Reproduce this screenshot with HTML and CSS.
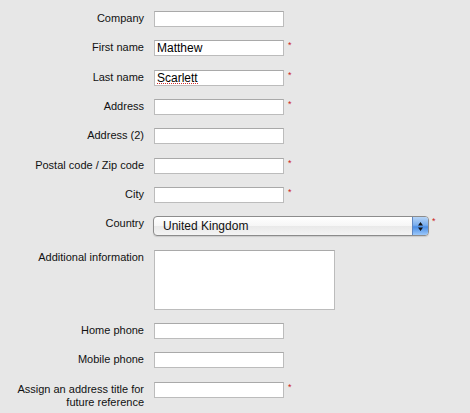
FILE: index.html
```html
<!DOCTYPE html>
<html>
<head>
<meta charset="utf-8">
<link rel="stylesheet" href="styles.css">
</head>
<body>
<form class="form">
  <label class="label">Company</label>
  <div class="field"><input class="text" type="text"></div>

  <label class="label">First name</label>
  <div class="field"><input class="text" type="text" value="Matthew"><span class="req">*</span></div>

  <label class="label">Last name</label>
  <div class="field"><input class="text spell" type="text" value="Scarlett"><span class="req">*</span></div>

  <label class="label">Address</label>
  <div class="field"><input class="text" type="text"><span class="req">*</span></div>

  <label class="label">Address (2)</label>
  <div class="field"><input class="text" type="text"></div>

  <label class="label">Postal code / Zip code</label>
  <div class="field"><input class="text" type="text"><span class="req">*</span></div>

  <label class="label">City</label>
  <div class="field"><input class="text" type="text"><span class="req">*</span></div>

  <label class="label">Country</label>
  <div class="field">
    <div class="select">
      <span class="select-value">United Kingdom</span>
      <span class="stepper">
        <svg width="7" height="11" viewBox="0 0 7 11"><path d="M3.5 1 L6 4.5 L1 4.5 Z M3.5 10 L6 6.5 L1 6.5 Z" fill="#111"/></svg>
      </span>
    </div>
    <span class="req req-select">*</span>
  </div>

  <label class="label">Additional information</label>
  <div class="field"><textarea class="area"></textarea></div>

  <label class="label">Home phone</label>
  <div class="field"><input class="text" type="text"></div>

  <label class="label">Mobile phone</label>
  <div class="field"><input class="text" type="text"></div>

  <label class="label">Assign an address title for future reference</label>
  <div class="field"><input class="text" type="text"><span class="req">*</span></div>
</form>
</body>
</html>
```

FILE: styles.css
```css
html, body {
  margin: 0;
  padding: 0;
  background: #e7e7e7;
}

.form {
  display: grid;
  grid-template-columns: 144px 1fr;
  column-gap: 10px;
  row-gap: 13.33px;
  padding-top: 11px;
  font-family: "Liberation Sans", Arial, sans-serif;
}

.label {
  font-size: 11px;
  line-height: 13px;
  padding-top: 1px;
  text-align: right;
  color: #111;
}

.field {
  display: flex;
  align-items: flex-start;
  gap: 4px;
}

.text {
  box-sizing: border-box;
  width: 130px;
  height: 16px;
  margin: 0;
  padding: 0 2px;
  border: 1px solid #bcbcbc;
  border-top-color: #a9a9a9;
  background: #fff;
  font-family: "Liberation Sans", Arial, sans-serif;
  font-size: 12px;
  color: #000;
  outline: none;
}

.spell {
  background-image: repeating-linear-gradient(90deg, #d03030 0 1px, transparent 1px 2px);
  background-size: 41px 1px;
  background-position: 2px 12px;
  background-repeat: no-repeat;
}

.req {
  font-size: 9px;
  line-height: 9px;
  color: #cc2222;
  margin-top: 1px;
}

.area {
  box-sizing: border-box;
  width: 181px;
  height: 60px;
  margin: 0;
  border: 1px solid #bcbcbc;
  border-top-color: #a9a9a9;
  background: #fff;
  resize: none;
  outline: none;
}

.select {
  box-sizing: border-box;
  width: 276px;
  height: 20px;
  margin-left: -1px;
  display: flex;
  align-items: stretch;
  border: 1px solid #8c8c8c;
  border-radius: 4px;
  background: linear-gradient(#ffffff 0%, #f6f6f6 50%, #e9e9e9 51%, #f4f4f4 100%);
  box-shadow: 0 1px 1px rgba(0,0,0,0.12);
  overflow: hidden;
}

.select-value {
  flex: 1;
  padding-left: 9px;
  font-size: 12px;
  line-height: 18px;
  color: #111;
}

.req-select {
  margin-left: -1px;
}

.stepper {
  width: 15px;
  display: flex;
  align-items: center;
  justify-content: center;
  border-left: 1px solid #5f86c0;
  background: linear-gradient(#b6d4f6 0%, #7aaeee 45%, #4a8de4 55%, #9cc8fa 100%);
}
```
